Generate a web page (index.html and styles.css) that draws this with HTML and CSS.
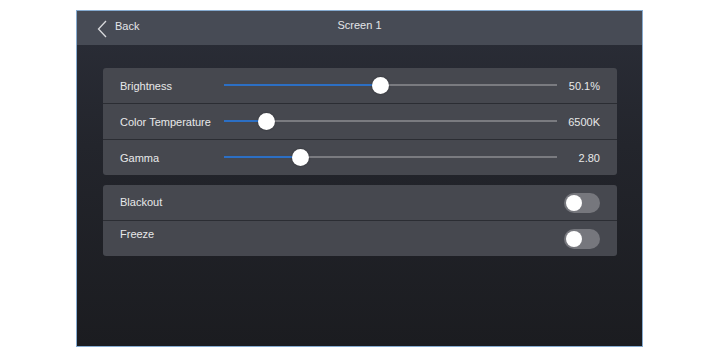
FILE: index.html
```html
<!DOCTYPE html>
<html lang="en">
  <head>
    <meta charset="UTF-8" />
    <meta name="viewport" content="width=device-width, initial-scale=1.0" />
    <title>Screen 1</title>
    <link rel="stylesheet" href="styles.css">
  </head>

  <body>
    <div class="frame">
      <div class="header">
        <div class="back">
          <svg class="chevron" width="10" height="18" viewBox="0 0 10 18">
            <path d="M9 1 L1.5 9 L9 17" fill="none" stroke="#d8d9dc" stroke-width="1.3" />
          </svg>
          <span>Back</span>
        </div>
        <div class="title">Screen 1</div>
      </div>

      <div class="content">
        <div class="panel">
          <div class="row">
            <div class="label">Brightness</div>
            <div class="slider">
              <div class="track"></div>
              <div class="fill" style="width: 46.8%"></div>
              <div class="thumb" style="left: 46.8%"></div>
            </div>
            <div class="value">50.1%</div>
          </div>
          <div class="row">
            <div class="label">Color Temperature</div>
            <div class="slider">
              <div class="track"></div>
              <div class="fill" style="width: 12.6%"></div>
              <div class="thumb" style="left: 12.6%"></div>
            </div>
            <div class="value">6500K</div>
          </div>
          <div class="row">
            <div class="label">Gamma</div>
            <div class="slider">
              <div class="track"></div>
              <div class="fill" style="width: 22.8%"></div>
              <div class="thumb" style="left: 22.8%"></div>
            </div>
            <div class="value">2.80</div>
          </div>
        </div>

        <div class="panel">
          <div class="row toggle-row">
            <div class="label">Blackout</div>
            <div class="toggle"><div class="knob"></div></div>
          </div>
          <div class="row toggle-row">
            <div class="label">Freeze</div>
            <div class="toggle"><div class="knob"></div></div>
          </div>
        </div>
      </div>
    </div>
  </body>
</html>
```

FILE: styles.css
```css
body {
  font-family: "Liberation Sans", Arial, sans-serif;
  margin: 0;
  padding: 0;
  background-color: #fff;
}

.frame {
  width: 567px;
  height: 337px;
  margin: 10px 0 0 76px;
  box-sizing: border-box;
  border: 1px solid #86abd0;
  background: linear-gradient(to bottom, #2b2e38 0%, #23252c 40%, #1b1c20 100%);
  display: flex;
  flex-direction: column;
}

.header {
  height: 34px;
  background-color: #474b55;
  display: flex;
  align-items: center;
  position: relative;
  color: #e4e5e8;
  font-size: 11px;
}

.back {
  display: flex;
  align-items: center;
  gap: 8px;
  margin-left: 20px;
  margin-top: -1px;
}

.chevron {
  display: block;
  margin-top: 3px;
}

.back span {
  margin-top: -3px;
}

.title {
  position: absolute;
  left: 0;
  right: 0;
  top: 8px;
  text-align: center;
}

.content {
  padding: 23px 25px 0 26px;
  display: flex;
  flex-direction: column;
  gap: 10px;
}

.panel {
  background-color: #46484f;
  border-radius: 3px;
  display: flex;
  flex-direction: column;
}

.row {
  height: 35px;
  display: flex;
  align-items: center;
  padding: 0 17px;
  color: #e8e8ea;
  font-size: 11px;
}

.row + .row {
  border-top: 1px solid #2b2d33;
}

.label {
  width: 104px;
  flex-shrink: 0;
}

.slider {
  position: relative;
  width: 333px;
  height: 17px;
}

.track {
  position: absolute;
  left: 0;
  right: 0;
  top: 7px;
  height: 2px;
  background-color: #7a7b80;
}

.fill {
  position: absolute;
  left: 0;
  top: 7px;
  height: 2px;
  background-color: #2c6fc4;
}

.thumb {
  position: absolute;
  top: 0;
  width: 17px;
  height: 17px;
  margin-left: -8px;
  border-radius: 50%;
  background-color: #fff;
  box-shadow: 0 0 2px rgba(0, 0, 0, 0.4);
}

.value {
  flex: 1;
  text-align: right;
}

.toggle-row {
  justify-content: space-between;
}

.toggle-row .label {
  margin-top: -2px;
}

.toggle-row:last-child .label {
  margin-top: -10px;
}

.toggle-row:last-child .toggle {
  margin-top: 1px;
}

.toggle {
  width: 36px;
  height: 20px;
  border-radius: 10px;
  background-color: #76777d;
  display: flex;
  align-items: center;
  padding-left: 2px;
  box-sizing: border-box;
}

.knob {
  width: 16px;
  height: 16px;
  border-radius: 50%;
  background-color: #fff;
}
```
